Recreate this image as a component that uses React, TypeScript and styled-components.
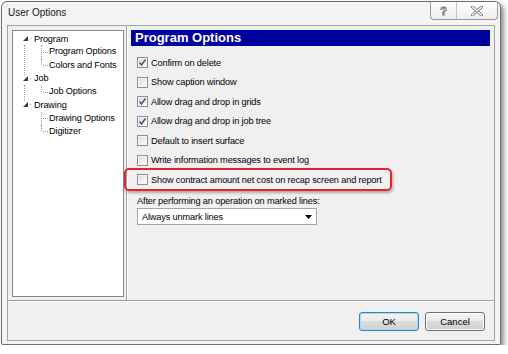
import React from "react";
import styled, { createGlobalStyle } from "styled-components";

const GlobalStyle = createGlobalStyle`
  html, body {
    margin: 0;
    padding: 0;
    background: #ffffff;
  }
  body {
    font-family: "Liberation Sans", Arial, sans-serif;
    color: #000;
  }
`;

const Window = styled.div`
  box-sizing: border-box;
  margin: 1px 0 0 1px;
  width: 500px;
  height: 344px;
  border: 1px solid #6d6d6d;
  border-radius: 6px 6px 2px 2px;
  background: #f4f4f4;
  box-shadow: 3px 3px 5px rgba(0, 0, 0, 0.45);
  display: flex;
  flex-direction: column;
`;

const TitleBar = styled.div`
  flex: none;
  height: 23px;
  display: flex;
  align-items: flex-start;
  padding: 0 2px 0 6px;
`;

const Title = styled.div`
  font-size: 10px;
  line-height: 22px;
  color: #151515;
`;

const CaptionGroup = styled.div`
  margin-left: auto;
  display: flex;
  height: 17px;
  border: 1px solid #9a9a9a;
  border-top: none;
  border-radius: 0 0 4px 4px;
  background: linear-gradient(#ffffff, #eeeeee);
  overflow: hidden;
`;

const CaptionButton = styled.div<{ $w: number; $sep?: boolean }>`
  width: ${(p) => p.$w}px;
  display: flex;
  align-items: center;
  justify-content: center;
  border-right: ${(p) => (p.$sep ? "1px solid #c4c4c4" : "none")};
`;

const HelpGlyph = styled.span`
  font: bold 11px "Liberation Sans", Arial, sans-serif;
  color: #ffffff;
  -webkit-text-stroke: 0.8px #6a6a6a;
`;

const Client = styled.div`
  position: relative;
  flex: none;
  margin: 0 5px;
  height: 316px;
  box-sizing: border-box;
  border: 1px solid #a3a3a3;
  background: #f0f0f0;
  display: flex;
  flex-direction: column;
  font-size: 9.2px;
  letter-spacing: -0.15px;
`;

const Main = styled.div`
  flex: none;
  height: 274px;
  display: flex;
`;

const LeftPane = styled.div`
  flex: none;
  width: 118px;
  box-sizing: border-box;
  padding: 4px 2px 3px 4px;
`;

const TreeBox = styled.div`
  height: 100%;
  box-sizing: border-box;
  border: 1px solid #828790;
  background: #ffffff;
  padding-top: 1px;
`;

const TreeGroup = styled.div<{ $last?: boolean }>`
  position: relative;
  &::before {
    content: "";
    display: ${(p) => (p.$last ? "none" : "block")};
    position: absolute;
    left: 11px;
    top: 13px;
    bottom: -3px;
    border-left: 1px dotted #a0a0a0;
  }
`;

const ParentRow = styled.div`
  height: 13.25px;
  display: flex;
  align-items: center;
  white-space: nowrap;
`;

const Expander = styled.svg`
  margin-left: 10px;
  flex: none;
`;

const Dot = styled.span`
  flex: none;
  width: 1px;
  height: 1px;
  margin-left: 2px;
  background: #9a9a9a;
`;

const ParentLabel = styled.span`
  margin-left: 3px;
`;

const ChildRow = styled.div<{ $last?: boolean }>`
  position: relative;
  height: 13.25px;
  line-height: 13.25px;
  padding-left: 36px;
  white-space: nowrap;
  &::before {
    content: "";
    position: absolute;
    left: 28px;
    top: 0;
    height: ${(p) => (p.$last ? "50%" : "100%")};
    border-left: 1px dotted #a0a0a0;
  }
  &::after {
    content: "";
    position: absolute;
    left: 30px;
    top: 50%;
    width: 5px;
    border-top: 1px dotted #a0a0a0;
  }
`;

const VSplit = styled.div`
  flex: none;
  width: 0;
  border-left: 1px solid #a0a0a0;
  border-right: 1px solid #ffffff;
`;

const RightPane = styled.div`
  flex: 1;
  padding: 4px 4px 0 3px;
  display: flex;
  flex-direction: column;
`;

const Header = styled.div`
  height: 16px;
  background: #00009c;
  color: #ffffff;
  font: bold 13px/16px "Liberation Sans", Arial, sans-serif;
  letter-spacing: 0;
  padding-left: 4px;
`;

const Options = styled.div`
  padding-left: 6px;
  margin-top: 7px;
  display: flex;
  flex-direction: column;
`;

const CheckRow = styled.label`
  height: 19.5px;
  display: flex;
  align-items: center;
  gap: 3px;
  white-space: nowrap;
`;

const Box = styled.span`
  flex: none;
  width: 11px;
  height: 11px;
  box-sizing: border-box;
  border: 1px solid #8e8f8f;
  background: linear-gradient(135deg, #d8d8d8 0%, #f3f3f3 65%, #ffffff 100%);
  box-shadow: inset 0 0 0 1px #f6f6f6;
  display: flex;
  align-items: center;
  justify-content: center;
`;

const FieldLabel = styled.div`
  margin-top: 5px;
  line-height: 12px;
`;

const Dropdown = styled.div`
  margin-top: 1.5px;
  width: 180px;
  height: 17px;
  box-sizing: border-box;
  border: 1px solid #a5a5a5;
  background: #ffffff;
  display: flex;
  align-items: center;
  justify-content: space-between;
  padding: 0 4px 0 4px;
`;

const HSplit = styled.div`
  flex: none;
  height: 0;
  border-top: 1px solid #a0a0a0;
  border-bottom: 1px solid #ffffff;
`;

const ButtonBar = styled.div`
  flex: 1;
  display: flex;
  justify-content: flex-end;
  align-items: flex-start;
  gap: 6px;
  padding: 10px 9px 0 0;
`;

const Button = styled.button<{ $default?: boolean }>`
  width: 60px;
  height: 19px;
  padding: 0;
  font: 9.5px "Liberation Sans", Arial, sans-serif;
  color: #000;
  border: 1px solid ${(p) => (p.$default ? "#3c7fb1" : "#707070")};
  border-radius: 3px;
  background: linear-gradient(#f2f2f2 0%, #ebebeb 45%, #dddddd 50%, #cfcfcf 100%);
  box-shadow: inset 0 0 0 1px ${(p) => (p.$default ? "#a6dbf7" : "#fbfbfb")};
`;

const Highlight = styled.div`
  position: absolute;
  left: 116px;
  top: 142px;
  width: 268px;
  height: 23px;
  box-sizing: border-box;
  border: 2px solid #e3262b;
  border-radius: 5px;
  box-shadow: 1px 2px 3px rgba(0, 0, 0, 0.3);
  pointer-events: none;
`;

const tree = [
  { label: "Program", children: ["Program Options", "Colors and Fonts"] },
  { label: "Job", children: ["Job Options"] },
  { label: "Drawing", children: ["Drawing Options", "Digitizer"] },
];

const options = [
  { label: "Confirm on delete", checked: true },
  { label: "Show caption window", checked: false },
  { label: "Allow drag and drop in grids", checked: true },
  { label: "Allow drag and drop in job tree", checked: true },
  { label: "Default to insert surface", checked: false },
  { label: "Write information messages to event log", checked: false },
  { label: "Show contract amount net cost on recap screen and report", checked: false },
];

function Check({ checked }: { checked: boolean }) {
  return (
    <Box>
      {checked && (
        <svg width="9" height="9" viewBox="0 0 9 9">
          <polyline points="1.5,4.5 3.5,7 7.5,1.5" fill="none" stroke="#3f558c" strokeWidth="1.5" />
        </svg>
      )}
    </Box>
  );
}

export default function App() {
  return (
    <>
      <GlobalStyle />
      <Window>
        <TitleBar>
          <Title>User Options</Title>
          <CaptionGroup>
            <CaptionButton $w={25} $sep>
              <HelpGlyph>?</HelpGlyph>
            </CaptionButton>
            <CaptionButton $w={40}>
              <svg width="12" height="10" viewBox="0 0 12 10">
                <path d="M1.5 1 L10.5 9 M10.5 1 L1.5 9" stroke="#7a7a7a" strokeWidth="3" strokeLinecap="round" />
                <path d="M1.5 1 L10.5 9 M10.5 1 L1.5 9" stroke="#ffffff" strokeWidth="1.2" strokeLinecap="round" />
              </svg>
            </CaptionButton>
          </CaptionGroup>
        </TitleBar>
        <Client>
          <Main>
            <LeftPane>
              <TreeBox>
                {tree.map((node, i) => (
                  <TreeGroup key={node.label} $last={i === tree.length - 1}>
                    <ParentRow>
                      <Expander width="5" height="5" viewBox="0 0 5 5">
                        <polygon points="5,0 5,5 0,5" fill="#3c3c3c" />
                      </Expander>
                      <Dot />
                      <ParentLabel>{node.label}</ParentLabel>
                    </ParentRow>
                    {node.children.map((c, j) => (
                      <ChildRow key={c} $last={j === node.children.length - 1}>
                        {c}
                      </ChildRow>
                    ))}
                  </TreeGroup>
                ))}
              </TreeBox>
            </LeftPane>
            <VSplit />
            <RightPane>
              <Header>Program Options</Header>
              <Options>
                {options.map((o) => (
                  <CheckRow key={o.label}>
                    <Check checked={o.checked} />
                    {o.label}
                  </CheckRow>
                ))}
                <FieldLabel>After performing an operation on marked lines:</FieldLabel>
                <Dropdown>
                  <span>Always unmark lines</span>
                  <svg width="7" height="4" viewBox="0 0 7 4">
                    <polygon points="0,0 7,0 3.5,4" fill="#000" />
                  </svg>
                </Dropdown>
              </Options>
            </RightPane>
          </Main>
          <HSplit />
          <ButtonBar>
            <Button $default>OK</Button>
            <Button>Cancel</Button>
          </ButtonBar>
          <Highlight />
        </Client>
      </Window>
    </>
  );
}
